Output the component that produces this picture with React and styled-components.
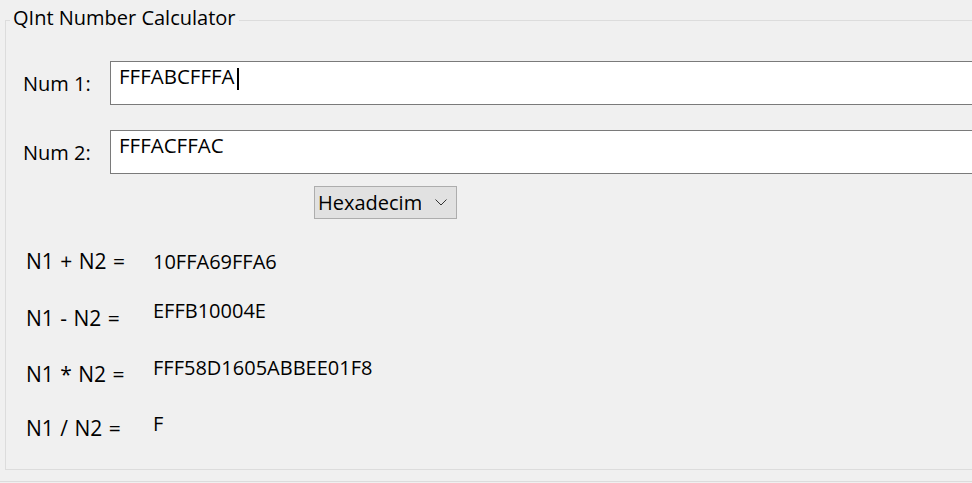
import styled, { createGlobalStyle } from 'styled-components';

const GlobalStyle = createGlobalStyle`
  html, body {
    margin: 0;
    padding: 0;
    background: #f0f0f0;
    overflow: hidden;
  }
  body {
    font-family: "Open Sans", "Noto Sans", sans-serif;
    color: #000;
  }
`;

const results = [
  { label: 'N1 + N2 =', value: '10FFA69FFA6', shift: 0 },
  { label: 'N1 - N2 =', value: 'EFFB10004E', shift: 8 },
  { label: 'N1 * N2 =', value: 'FFF58D1605ABBEE01F8', shift: 7 },
  { label: 'N1 / N2 =', value: 'F', shift: 5 },
];

const App = () => {
  return (
    <Window className='Window'>
      <GlobalStyle />
      {/* Group box */}
      <GroupBox className='GroupBox'>
        <Legend>QInt Number Calculator</Legend>

        {/* Inputs */}
        <InputRow className='InputRow'>
          <FieldLabel>Num 1:</FieldLabel>
          <TextBox>
            FFFABCFFFA
            <Caret />
          </TextBox>
        </InputRow>
        <InputRow className='InputRow'>
          <FieldLabel>Num 2:</FieldLabel>
          <TextBox>FFFACFFAC</TextBox>
        </InputRow>

        {/* Base select */}
        <ComboRow className='ComboRow'>
          <ComboBox className='ComboBox'>
            <ComboText>Hexadecimal</ComboText>
            <svg width='12' height='7' viewBox='0 0 12 7'>
              <polyline points='0.5,0.5 6,6 11.5,0.5' fill='none' stroke='#333' strokeWidth='1' />
            </svg>
          </ComboBox>
        </ComboRow>

        {/* Results */}
        <Results className='Results'>
          {results.map((r) => (
            <ResultRow key={r.label}>
              <ResultLabel $shift={r.shift}>{r.label}</ResultLabel>
              <ResultValue>{r.value}</ResultValue>
            </ResultRow>
          ))}
        </Results>
      </GroupBox>
    </Window>
  );
};
export default App;

const Window = styled.div`
  width: 972px;
  height: 482px;
  padding: 4px 0 0 5px;
  box-sizing: border-box;
  overflow: hidden;
  border-bottom: 1px solid #dcdcdc;
`;

const GroupBox = styled.fieldset`
  margin: 0;
  width: 1000px;
  height: 466px;
  box-sizing: border-box;
  border: 1px solid #dcdcdc;
  padding: 0;
  min-width: 0;
  font-size: 20px;
  line-height: 27px;
`;

const Legend = styled.legend`
  margin-left: 4px;
  padding: 0 3px 5px;
  font-size: 20px;
  line-height: 27px;
`;

const InputRow = styled.div`
  display: flex;
  align-items: center;
  margin-top: 25px;
`;

const FieldLabel = styled.div`
  width: 104px;
  padding-left: 17px;
  box-sizing: border-box;
  flex-shrink: 0;
`;

const TextBox = styled.div`
  flex: 1;
  height: 44px;
  box-sizing: border-box;
  border: 1px solid #7a7a7a;
  background: #fff;
  padding: 1px 0 0 8px;
  font-size: 20.5px;
  line-height: 27px;
  display: flex;
  align-items: flex-start;
`;

const Caret = styled.span`
  display: inline-block;
  width: 2px;
  height: 22px;
  margin: 5px 0 0 2px;
  background: #000;
`;

const ComboRow = styled.div`
  display: flex;
  margin: 12px 0 0 308px;
`;

const ComboBox = styled.div`
  width: 143px;
  height: 33px;
  box-sizing: border-box;
  border: 1px solid #adadad;
  background: #e1e1e1;
  display: flex;
  align-items: center;
  padding: 0 9px 0 3px;
  gap: 14px;
`;

const ComboText = styled.span`
  width: 103px;
  flex-shrink: 0;
  overflow: hidden;
  white-space: nowrap;
`;

const Results = styled.div`
  display: flex;
  flex-direction: column;
  gap: 22px;
  margin: 29px 0 0 20px;
`;

const ResultRow = styled.div`
  display: flex;
  align-items: flex-start;
`;

const ResultLabel = styled.div`
  width: 127px;
  font-size: 21px;
  word-spacing: 1px;
  padding-top: ${(p) => p.$shift}px;
`;

const ResultValue = styled.div``;
